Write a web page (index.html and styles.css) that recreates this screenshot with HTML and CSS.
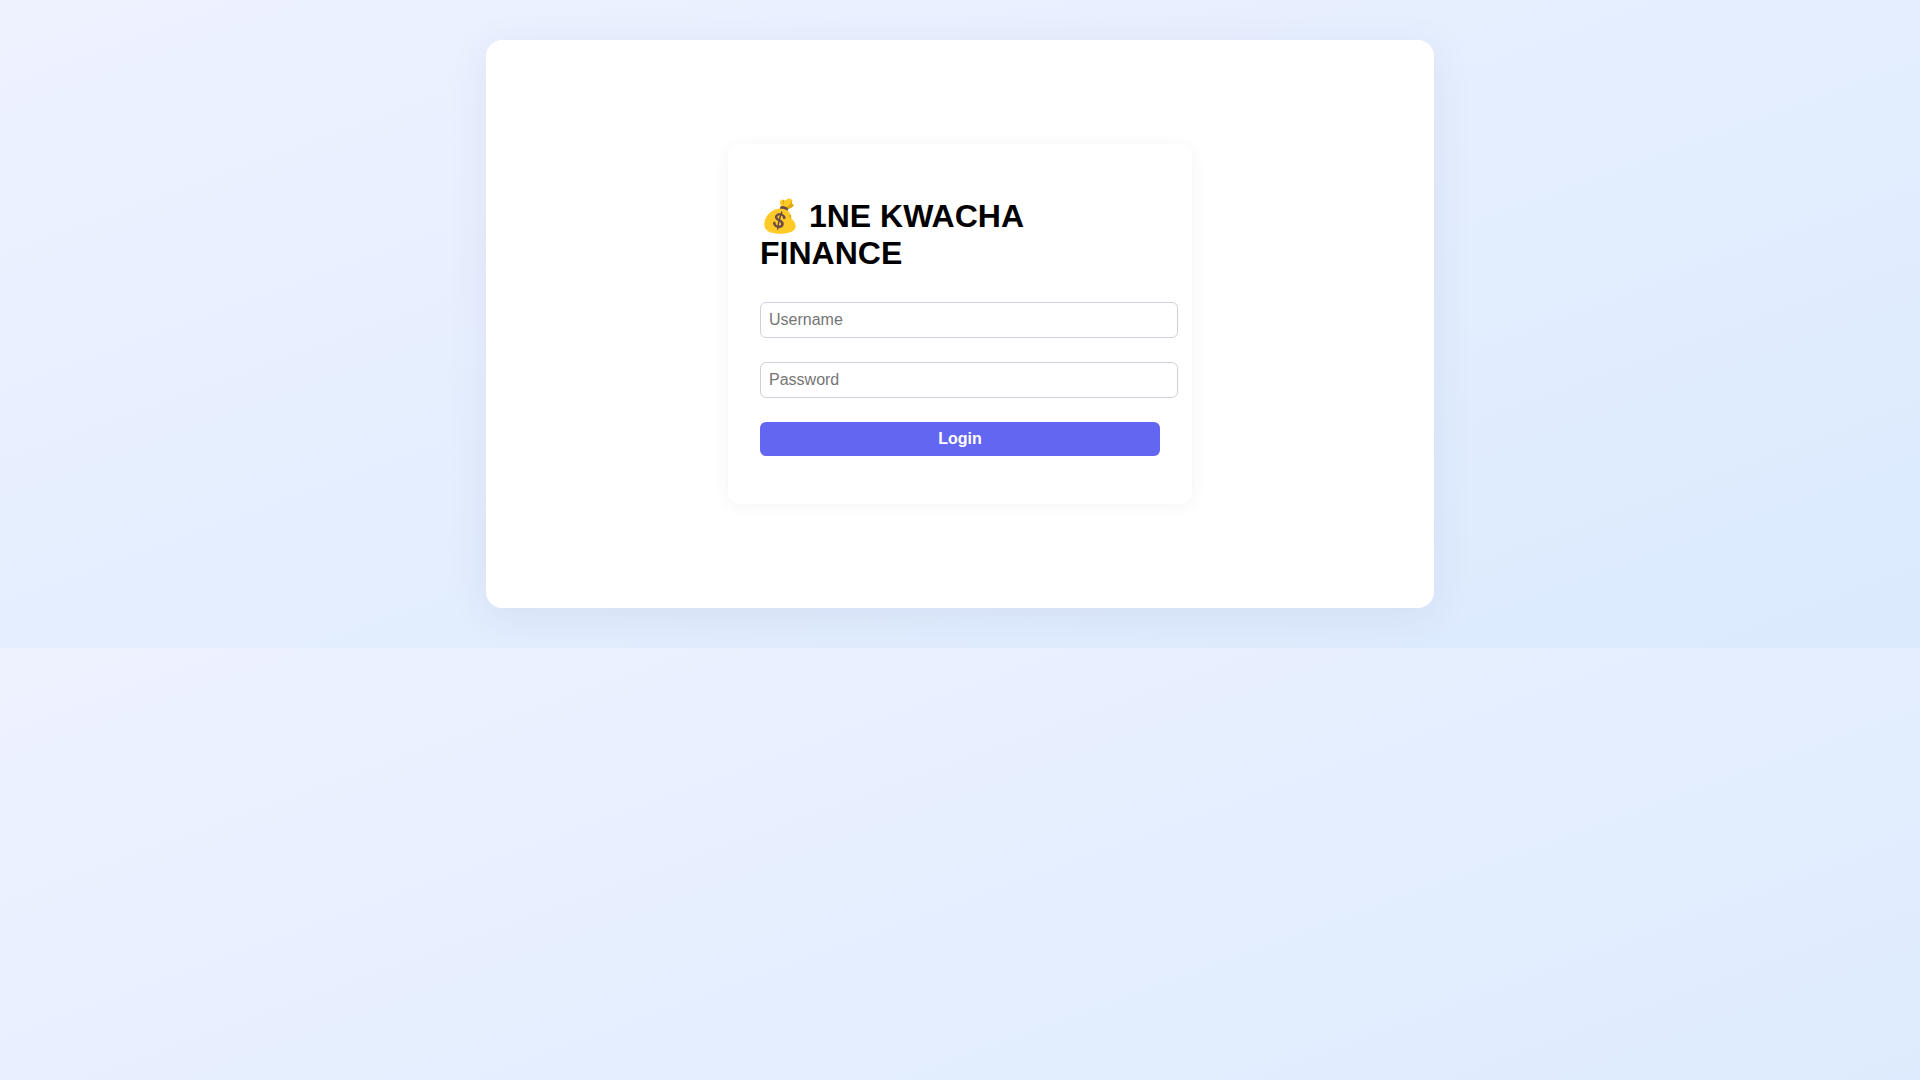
FILE: index.html
```html
<!DOCTYPE html>
<html lang="en">
<head>
<meta charset="utf-8">
<title>1NE KWACHA FINANCE</title>
<link rel="stylesheet" href="styles.css">
</head>
<body>
<main class="container">
<form class="login-box">
<h1 class="login-title">💰 1NE KWACHA FINANCE</h1>
<input class="field" type="text" placeholder="Username" aria-label="Username">
<input class="field" type="password" placeholder="Password" aria-label="Password">
<button class="login-button" type="submit">Login</button>
</form>
</main>
</body>
</html>
```
FILE: styles.css
```css
body {
  margin: 0;
  font-family: "Liberation Sans", Arial, sans-serif;
  background: linear-gradient(160deg, #eef2ff, #dbeafe);
  overflow-x: hidden;
}

.container {
  max-width: 900px;
  margin: 40px auto;
  padding: 24px;
  background: #fff;
  border-radius: 16px;
  box-shadow: 0 8px 40px rgba(60, 60, 120, 0.08);
}

.login-box {
  max-width: 400px;
  margin: 80px auto;
  padding: 32px;
  background: #fff;
  border-radius: 12px;
  box-shadow: 0 2px 16px rgba(60, 60, 120, 0.06);
}

.login-title {
  margin: 22px 0 30px;
  font-size: 32px;
  line-height: 37px;
}

.field {
  display: block;
  width: 100%;
  margin: 0 0 24px;
  padding: 8px;
  border: 1px solid #d1d1dc;
  border-radius: 6px;
  background: #fff;
  font: 16px "Liberation Sans", Arial, sans-serif;
}

.login-button {
  display: block;
  width: 100%;
  margin: 0 0 16px;
  padding: 8px;
  border: none;
  border-radius: 6px;
  background: #6366f1;
  color: #fff;
  font: bold 16px "Liberation Sans", Arial, sans-serif;
}
```
